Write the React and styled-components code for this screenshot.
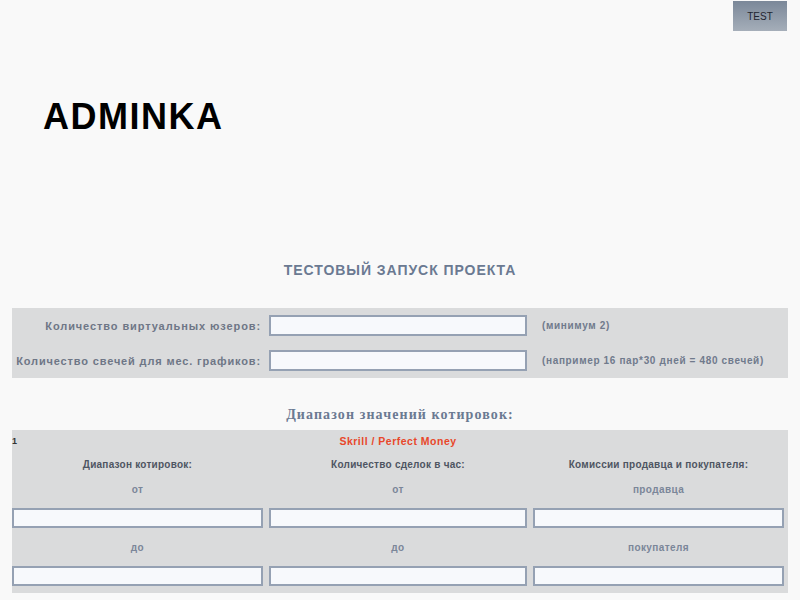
import React from "react";
import styled, { createGlobalStyle } from "styled-components";

const GlobalStyle = createGlobalStyle`
  html, body {
    margin: 0;
    padding: 0;
    background: #f9f9f9;
    font-family: "Liberation Sans", Arial, sans-serif;
  }
`;

const Page = styled.div`
  width: 800px;
  height: 600px;
  overflow: hidden;
  display: flex;
  flex-direction: column;
`;

const TopBar = styled.div`
  display: flex;
  justify-content: flex-end;
  padding: 1px 13px 0 0;
`;

const TestButton = styled.button`
  width: 54px;
  height: 30px;
  border: none;
  padding: 0;
  background: linear-gradient(to bottom, #7b8899, #a5aeb9);
  color: #1f2530;
  font-family: "Liberation Sans", Arial, sans-serif;
  font-size: 10px;
  cursor: pointer;
`;

const Logo = styled.h1`
  margin: 70px 0 0 43px;
  height: 32px;
  line-height: 32px;
  font-size: 36px;
  font-weight: bold;
  letter-spacing: 1.5px;
  color: #000;
`;

const Title = styled.h2`
  margin: 130px 0 0;
  height: 14px;
  line-height: 14px;
  text-align: center;
  font-size: 14px;
  font-weight: bold;
  letter-spacing: 0.95px;
  color: #6b7a92;
`;

const Panel = styled.div`
  margin: 31px 12px 0;
  background: #dadbdc;
  padding: 7px 0;
  display: flex;
  flex-direction: column;
  gap: 14px;
`;

const Grid = styled.div`
  display: grid;
  grid-template-columns: 251px 258px 251px;
  column-gap: 6px;
  align-items: center;
  height: ${(p) => p.$h}px;
`;

const Label = styled.div`
  text-align: ${(p) => p.$align || "center"};
  padding-right: ${(p) => (p.$align === "right" ? 2 : 0)}px;
  font-size: ${(p) => p.$size || 11}px;
  letter-spacing: ${(p) => p.$ls || 0}px;
  font-weight: bold;
  color: ${(p) => p.$color || "#6e7686"};
  white-space: nowrap;
`;

const Input = styled.input`
  box-sizing: border-box;
  width: 100%;
  height: ${(p) => p.$h || 20}px;
  border: 2px solid #95a1b3;
  background: #f7f9fc;
  margin: 0;
  outline: none;
`;

const Note = styled.div`
  padding-left: 9px;
  font-size: 10px;
  font-weight: bold;
  letter-spacing: 0.65px;
  color: #707a8c;
  white-space: nowrap;
`;

const SubTitle = styled.h3`
  margin: 30px 0 0;
  height: 22px;
  line-height: 14px;
  text-align: center;
  font-family: "Liberation Serif", "Times New Roman", serif;
  font-size: 14px;
  font-weight: bold;
  letter-spacing: 1.1px;
  color: #6b7a92;
`;

const PanelTwo = styled.div`
  margin: 0 12px;
  background: #dadbdc;
  padding: 0 0 7px;
  display: flex;
  flex-direction: column;
`;

const Num = styled.div`
  font-size: 9px;
  font-weight: bold;
  color: #333;
`;

const columns = [
  { head: "Диапазон котировок:", top: "от", bottom: "до" },
  { head: "Количество сделок в час:", top: "от", bottom: "до" },
  { head: "Комиссии продавца и покупателя:", top: "продавца", bottom: "покупателя" },
];

export default function App() {
  return (
    <Page>
      <GlobalStyle />
      <TopBar>
        <TestButton>TEST</TestButton>
      </TopBar>
      <Logo>ADMINKA</Logo>
      <Title>ТЕСТОВЫЙ ЗАПУСК ПРОЕКТА</Title>

      <Panel>
        <Grid $h={21}>
          <Label $align="right" $ls={0.9}>Количество виртуальных юзеров:</Label>
          <Input $h={21} />
          <Note>(минимум 2)</Note>
        </Grid>
        <Grid $h={21}>
          <Label $align="right" $ls={0.85}>Количество свечей для мес. графиков:</Label>
          <Input $h={21} />
          <Note>(например 16 пар*30 дней = 480 свечей)</Note>
        </Grid>
      </Panel>

      <SubTitle>Диапазон значений котировок:</SubTitle>

      <PanelTwo>
        <Grid $h={22}>
          <Num>1</Num>
          <Label $size={10.5} $ls={0.5} $color="#e8472a">Skrill / Perfect Money</Label>
          <div />
        </Grid>
        <Grid $h={24}>
          {columns.map((c) => (
            <Label key={c.head} $size={10} $ls={0.25} $color="#4e5562">{c.head}</Label>
          ))}
        </Grid>
        <Grid $h={26}>
          {columns.map((c, i) => (
            <Label key={i} $size={10} $ls={0.4} $color="#7a8699">{c.top}</Label>
          ))}
        </Grid>
        <Grid $h={20} style={{ marginTop: 6 }}>
          {columns.map((c, i) => (
            <Input key={i} />
          ))}
        </Grid>
        <Grid $h={38}>
          {columns.map((c, i) => (
            <Label key={i} $size={10} $ls={0.4} $color="#7a8699">{c.bottom}</Label>
          ))}
        </Grid>
        <Grid $h={20}>
          {columns.map((c, i) => (
            <Input key={i} />
          ))}
        </Grid>
      </PanelTwo>
    </Page>
  );
}
